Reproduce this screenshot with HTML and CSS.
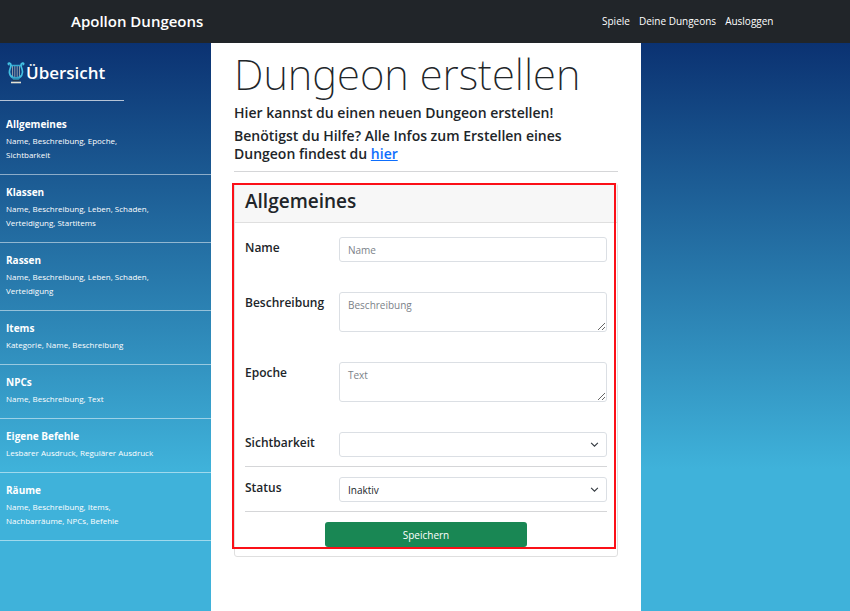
FILE: index.html
```html
<!DOCTYPE html>
<html lang="de">
<head>
<meta charset="utf-8">
<meta name="viewport" content="width=device-width, initial-scale=1">
<title>Apollon Dungeons</title>
<link rel="stylesheet" href="styles.css">
</head>
<body>
<header class="navbar">
  <a class="brand" href="#">Apollon Dungeons</a>
  <nav class="nav-links">
    <a href="#">Spiele</a>
    <a href="#">Deine Dungeons</a>
    <a href="#">Ausloggen</a>
  </nav>
</header>
<div class="layout">
  <aside class="sidebar">
    <div class="sidebar-head">
      <svg class="lyre" viewBox="0 0 18 22" aria-hidden="true">
        <path d="M5.5 4v11M7.800 4v11M10.200 4v11M12.500 4v11" stroke="#8d9aaa" stroke-width="1" fill="none"/>
        <path d="M3.500 3.500h11" stroke="#35a9d0" stroke-width="1.500"/>
        <path d="M2.500 3C.8 2.800 1 .9 2.500 1.100C4.800 1.500 4 4.500 3 7C1.300 11.500 3.500 16 9 16s7.700-4.500 6-9C14 4.500 13.200 1.500 15.500 1.100c1.500-.2 1.700 1.700 0 1.900" stroke="#43c0e2" stroke-width="1.700" fill="none"/>
        <path d="M5 15.500h8l-1.500 3h-5z" fill="#2b8fb8"/>
        <path d="M5.500 18.500h7" stroke="#24354a" stroke-width="1.500"/>
        <path d="M4 20.500h10" stroke="#e6e3d4" stroke-width="1.600"/>
      </svg>
      <h2>Übersicht</h2>
    </div>
    <ul class="toc">
      <li><h3>Allgemeines</h3><p>Name, Beschreibung, Epoche,<br>Sichtbarkeit</p></li>
      <li><h3>Klassen</h3><p>Name, Beschreibung, Leben, Schaden,<br>Verteidigung, Startitems</p></li>
      <li><h3>Rassen</h3><p>Name, Beschreibung, Leben, Schaden,<br>Verteidigung</p></li>
      <li><h3>Items</h3><p>Kategorie, Name, Beschreibung</p></li>
      <li><h3>NPCs</h3><p>Name, Beschreibung, Text</p></li>
      <li><h3>Eigene Befehle</h3><p>Lesbarer Ausdruck, Regulärer Ausdruck</p></li>
      <li><h3>Räume</h3><p>Name, Beschreibung, Items,<br>Nachbarräume, NPCs, Befehle</p></li>
    </ul>
  </aside>
  <main class="content">
    <h1>Dungeon erstellen</h1>
    <p class="lead">Hier kannst du einen neuen Dungeon erstellen!</p>
    <p class="lead">Benötigst du Hilfe? Alle Infos zum Erstellen eines<br>Dungeon findest du <a href="#">hier</a></p>
    <hr>
    <form class="card">
      <h2 class="card-header">Allgemeines</h2>
      <div class="card-body">
        <div class="row spaced">
          <label for="name">Name</label>
          <input id="name" type="text" placeholder="Name">
        </div>
        <div class="row spaced">
          <label for="description">Beschreibung</label>
          <textarea id="description" placeholder="Beschreibung"></textarea>
        </div>
        <div class="row spaced">
          <label for="epoch">Epoche</label>
          <textarea id="epoch" placeholder="Text"></textarea>
        </div>
        <div class="row ruled">
          <label for="visibility">Sichtbarkeit</label>
          <div class="select">
            <select id="visibility"><option></option></select>
            <svg viewBox="0 0 16 16" aria-hidden="true"><path d="m2 5 6 6 6-6"/></svg>
          </div>
        </div>
        <div class="row ruled">
          <label for="status">Status</label>
          <div class="select">
            <select id="status"><option>Inaktiv</option></select>
            <svg viewBox="0 0 16 16" aria-hidden="true"><path d="m2 5 6 6 6-6"/></svg>
          </div>
        </div>
        <button type="submit">Speichern</button>
      </div>
    </form>
  </main>
</div>
</body>
</html>
```
FILE: styles.css
```css
* {
  box-sizing: border-box;
}

body {
  margin: 0;
  min-height: 100vh;
  display: flex;
  flex-direction: column;
  font-family: "Open Sans", "Noto Sans", sans-serif;
  font-size: 10px;
  color: #212529;
}

h1, h2, h3, p, ul {
  margin: 0;
  padding: 0;
}

.navbar {
  display: flex;
  align-items: center;
  justify-content: space-between;
  height: 43px;
  padding: 0 9% 2px 71px;
  background: #212529;
}

.navbar a {
  color: #fff;
  text-decoration: none;
}

.navbar .brand {
  font-size: 15px;
  font-weight: 600;
}

.nav-links {
  display: flex;
  gap: 9px;
}

.layout {
  flex: 1;
  display: grid;
  grid-template-columns: 211fr 430fr 209fr;
  background: linear-gradient(#0b3272, #3fb2da 75%);
}

.sidebar {
  color: #fff;
}

.sidebar-head {
  display: flex;
  align-items: center;
  gap: 1px;
  width: 124px;
  height: 58px;
  padding: 2px 0 0 7px;
  border-bottom: 1px solid #b5c3d6;
}

.sidebar-head h2 {
  font-size: 17px;
  font-weight: 600;
}

.lyre {
  width: 18px;
  height: 22px;
}

.toc {
  padding-top: 6px;
  list-style: none;
}

.toc li {
  padding: 10px 6px 12px;
  border-bottom: 1px solid rgba(255, 255, 255, 0.5);
}

.toc h3 {
  margin-bottom: 3px;
  font-size: 10px;
  line-height: 14px;
  font-weight: 700;
}

.toc p {
  font-size: 8px;
  line-height: 14px;
}

.content {
  padding: 6px 23px 0;
  background: #fff;
}

h1 {
  margin-bottom: 5px;
  font-family: "Noto Sans", "Open Sans", sans-serif;
  font-size: 42px;
  line-height: 50px;
  font-weight: 200;
}

.lead {
  margin-bottom: 5px;
  font-size: 14px;
  line-height: 18px;
  font-weight: 600;
}

.lead a {
  color: #0d6efd;
}

hr {
  margin: 8px 0 11px;
  border: 0;
  border-top: 1px solid #d5d6d8;
}

.card {
  position: relative;
  border: 1px solid #dfdfdf;
  border-radius: 3px;
}

/* Highlight frame drawn over the card */
.card::after {
  content: "";
  position: absolute;
  inset: -1px 1px 7px -3px;
  border: 2px solid #fb1018;
  pointer-events: none;
}

.card-header {
  padding: 4px 10px 8px;
  font-size: 19px;
  line-height: 26px;
  font-weight: 600;
  background: #f7f7f7;
  border-bottom: 1px solid #dfdfdf;
}

.card-body {
  padding: 14px 10px 9px;
}

.row {
  display: grid;
  grid-template-columns: 94px 1fr;
  align-items: start;
}

.row.spaced {
  margin-bottom: 30px;
}

.row.ruled {
  margin-bottom: 10px;
  padding-bottom: 9px;
  border-bottom: 1px solid #d5d6d8;
}

label {
  font-size: 12px;
  line-height: 22px;
  font-weight: 600;
}

input, textarea, select {
  display: block;
  width: 100%;
  height: 25px;
  padding: 0 8px;
  font: inherit;
  color: #212529;
  background: #fff;
  border: 1px solid #dbdfe4;
  border-radius: 3px;
}

textarea {
  height: 40px;
  padding-top: 5px;
}

select {
  appearance: none;
}

::placeholder {
  color: #7b8289;
}

.select {
  position: relative;
}

.select svg {
  position: absolute;
  top: 8px;
  right: 8px;
  width: 9px;
  height: 9px;
  fill: none;
  stroke: #343a40;
  stroke-width: 2;
  pointer-events: none;
}

button {
  display: block;
  width: 56%;
  height: 25px;
  margin: 0 auto;
  font: inherit;
  color: #fff;
  background: #198754;
  border: 0;
  border-radius: 3px;
}
```
